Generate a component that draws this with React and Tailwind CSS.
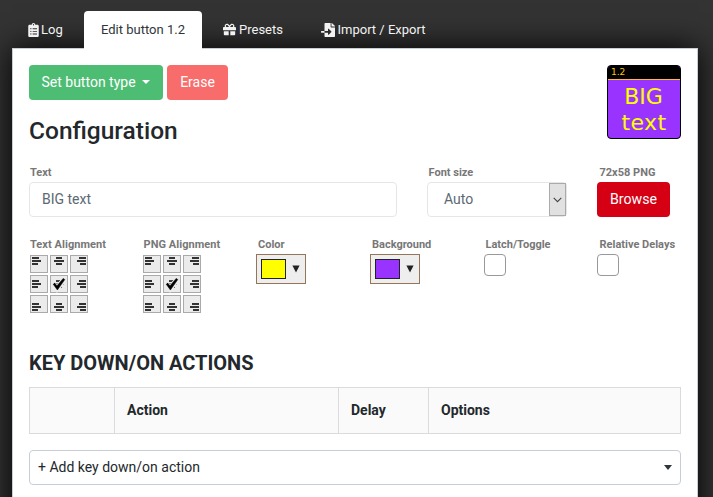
import React from 'react';
import { FaClipboardList, FaGift, FaFileImport } from 'react-icons/fa';

const bars = { left: [[2, 7], [2, 9], [2, 6]], center: [[6, 6], [4, 10], [6, 6]], right: [[9, 7], [7, 9], [10, 6]] };
const offsets = [2, 5, 8];

function AlignCell({ h, row, checked }) {
  return (
    <svg width="18" height="18" viewBox="0 0 18 18" className="block">
      <rect x="0.5" y="0.5" width="17" height="17" fill="#ebebeb" stroke="#aaa" />
      {bars[h].map(([x, w], i) => (
        <rect key={i} x={x} y={offsets[row] + i * 3} width={w} height="2" fill="#333" />
      ))}
      {checked && (
        <>
          <path d="M3.8 9.5 7 13.5 14 4.8" fill="none" stroke="#ebebeb" strokeWidth="5.5" />
          <rect x="6" y="5" width="3" height="1.5" fill="#444" />
          <path d="M3.2 9.2 4.8 8.2 7 10.8 13.2 3.4 14.8 4.6 7.4 15Z" fill="#000" stroke="#000" strokeWidth="0.5" />
        </>
      )}
    </svg>
  );
}

function AlignGrid() {
  return (
    <div className="ml-px mt-[2px] grid w-[58px] grid-cols-3 gap-[2px]">
      {[0, 1, 2].map((row) =>
        ['left', 'center', 'right'].map((h) => (
          <AlignCell key={row + h} h={h} row={row} checked={row === 1 && h === 'center'} />
        ))
      )}
    </div>
  );
}

function Label({ children }) {
  return <div className="ml-px h-4 whitespace-nowrap text-[11px] font-bold leading-4 text-[#777]">{children}</div>;
}

function Swatch({ children }) {
  return (
    <div className="mt-px flex h-[30px] w-[50px] items-center border border-[#957558] bg-[#eee] pl-1">
      {children}
      <svg width="8" height="8" viewBox="0 0 8 8" className="ml-[6px]"><path d="M0.4 0.5H7.6L4 7.5Z" fill="#222" /></svg>
    </div>
  );
}

export default function App() {
  return (
    <div className="h-[497px] w-[713px] overflow-hidden bg-[#333] font-['Roboto',sans-serif] text-[14px] text-[#23282c]">
      <div className="relative z-10 flex h-12 items-end pl-3 text-[13px] text-[#f2f2f2]">
        <div className="flex h-[37px] w-[72px] items-center pl-4"><FaClipboardList className="mr-[2px] h-[14px] w-[11px]" />Log</div>
        <div className="-mb-px flex h-[38px] w-[118px] items-center justify-center rounded-t bg-white pb-px text-[#2f353a]">Edit button 1.2</div>
        <div className="flex h-[37px] w-[98px] items-center pl-[21px]"><FaGift className="mr-[3px] h-[13px] w-[13px]" />Presets</div>
        <div className="flex h-[37px] items-center pl-[20.5px]"><FaFileImport className="mr-[3px] h-[14px] w-[14px]" />Import / Export</div>
      </div>
      <div className="flex h-[449px] pl-3">
        <main className="h-[500px] w-[686px] shrink-0 border border-[#c8ced3] bg-white px-4 pt-4 shadow-[0_0_30px_#000]">
          <div className="flex h-[74px] justify-between">
            <div>
              <div className="flex gap-1 text-white">
                <button className="flex h-[35px] w-[134px] items-center rounded bg-[#4dbd74] pl-[12.5px]">
                  Set button type
                  <svg width="8" height="4" viewBox="0 0 8 4" className="mb-[2px] ml-[6px]"><path d="M0 0H8L4 4Z" fill="white" /></svg>
                </button>
                <button className="h-[35px] w-[61px] rounded bg-[#f86c6b]">Erase</button>
              </div>
              <h1 className="mt-[16px] text-[24.5px] font-medium leading-[29px]">Configuration</h1>
            </div>
            <div className="h-[74px] w-[74px] overflow-hidden rounded-[4px] border border-black bg-[#9933ff] font-['DejaVu_Sans',sans-serif] text-[#ffff00]">
              <div className="h-[14px] border-b border-[#ffc600] bg-black pl-[3px] text-[9px] leading-[13px] text-[#ffc600]">1.2</div>
              <div className="mt-[4px] text-center text-[22px] leading-[26px]">
                <div className="-ml-[1px]">BIG</div><div className="tracking-[0.4px]">text</div>
              </div>
            </div>
          </div>

          <div className="mt-[26px] flex">
            <div className="w-[398px]"><Label>Text</Label>
              <div className="mt-px flex h-[35px] w-[368px] items-center rounded border border-[#e4e7ea] pl-3 text-[#5c6873]">BIG text</div>
            </div>
            <div className="w-[170px]"><Label><span className="ml-[0.5px]">Font size</span></Label>
              <div className="mt-px flex h-[35px] w-[140px] items-center justify-between rounded border border-[#e4e7ea] pl-4 text-[#5c6873]">
                Auto
                <div className="flex h-[33px] w-[17px] items-center justify-center border border-[#aaa] bg-[#e1e1e1]">
                  <svg width="9" height="6" viewBox="0 0 9 6"><path d="M0.7 0.8 4.5 4.6 8.3 0.8" fill="none" stroke="#444" strokeWidth="1.1" /></svg>
                </div>
              </div>
            </div>
            <div><Label><span className="ml-[1.5px]">72x58 PNG</span></Label>
              <button className="mt-px block h-[35px] w-[73px] rounded bg-[#d50014] text-[14.2px] text-white">Browse</button>
            </div>
          </div>

          <div className="mt-[20px] grid grid-cols-[113px_114px_114px_114px_114px_83px]">
            <div><Label><span className="tracking-[0.05px]">Text Alignment</span></Label><AlignGrid /></div>
            <div><Label><span className="ml-[0.5px] tracking-[0.05px]">PNG Alignment</span></Label><AlignGrid /></div>
            <div><Label><span className="ml-px">Color</span></Label><Swatch><i className="h-5 w-[25px] border border-[#222] bg-[#ffff00]" /></Swatch></div>
            <div><Label><span className="ml-px">Background</span></Label><Swatch><i className="h-5 w-[25px] border border-[#222] bg-[#9933ff]" /></Swatch></div>
            <div><Label><span className="ml-[0.5px]">Latch/Toggle</span></Label><div className="mt-px h-[22px] w-[22px] rounded border border-[#999]" /></div>
            <div><Label><span className="ml-[0.5px]">Relative Delays</span></Label><div className="-ml-px mt-px h-[22px] w-[22px] rounded border border-[#999]" /></div>
          </div>

          <h2 className="mt-[38px] text-[20px] font-bold leading-6">KEY DOWN/ON ACTIONS</h2>
          <div className="mt-3 grid h-[47px] grid-cols-[85px_224px_90px_253px] border border-[#d9dbdd] bg-[#fafafa] font-bold leading-[45px]">
            <div className="border-r border-[#d9dbdd]" />
            <div className="border-r border-[#d9dbdd] pl-3">Action</div>
            <div className="border-r border-[#d9dbdd] pl-3">Delay</div>
            <div className="pl-3">Options</div>
          </div>
          <div className="mt-4 flex h-[35px] items-center justify-between rounded border border-[#c8ced8] pl-2 pr-2">
            + Add key down/on action
            <svg width="8" height="5" viewBox="0 0 8 5"><path d="M0 0H8L4 5Z" fill="#2f353a" /></svg>
          </div>
        </main>
      </div>
    </div>
  );
}
